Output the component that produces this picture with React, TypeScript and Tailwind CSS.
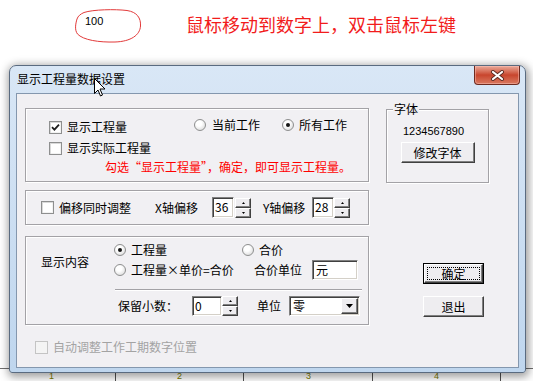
import React from 'react';

const face = 'bg-[#f1f0f3]';
const raised =
  'bg-[#eeedf0] border border-t-white border-l-white border-b-[#404040] border-r-[#404040] shadow-[inset_-1px_-1px_0_#808080]';
const sunken =
  'bg-white border border-t-[#808080] border-l-[#808080] border-b-white border-r-white shadow-[inset_1px_1px_0_#404040,inset_-1px_-1px_0_#d4d0c8]';

const Check: React.FC<{ checked?: boolean; disabled?: boolean }> = ({ checked, disabled }) => (
  <span
    className={`w-[13px] h-[13px] shrink-0 border flex items-center justify-center ${
      disabled
        ? 'border-[#c4c4c4] bg-[#f4f4f4]'
        : 'border-[#8e8f8f] bg-white shadow-[inset_1px_1px_0_#d9d9d9,inset_-1px_-1px_0_#f2f2f2]'
    }`}
  >
    {checked && (
      <svg width="9" height="9" viewBox="0 0 9 9">
        <path d="M1 4.2 L3.4 6.6 L8 1.6" stroke="#1d1d1d" strokeWidth="1.8" fill="none" />
      </svg>
    )}
  </span>
);

const Radio: React.FC<{ on?: boolean }> = ({ on }) => (
  <span className="w-[12px] h-[12px] shrink-0 rounded-full border border-[#8e8f8f] bg-[radial-gradient(circle_at_40%_35%,#ffffff_30%,#d2d2d2)] flex items-center justify-center">
    {on && <span className="w-[4px] h-[4px] rounded-full bg-[#151515]" />}
  </span>
);

const Spin: React.FC = () => (
  <div className="w-[16px] h-[20px] flex flex-col shrink-0">
    <div className={`h-[10px] ${raised} flex items-center justify-center`}>
      <svg width="3" height="2" viewBox="0 0 3 2">
        <path d="M1.5 0 L3 2 L0 2Z" fill="#000" />
      </svg>
    </div>
    <div className={`h-[10px] ${raised} flex items-center justify-center`}>
      <svg width="3" height="2" viewBox="0 0 3 2">
        <path d="M0 0 L3 0 L1.5 2Z" fill="#000" />
      </svg>
    </div>
  </div>
);

const Group: React.FC<{ className: string; children: React.ReactNode }> = ({ className, children }) => (
  <div className={`border border-[#a3a2a6] shadow-[inset_1px_1px_0_#ffffff,1px_1px_0_#ffffff] ${className}`}>{children}</div>
);

export default function App() {
  return (
    <div className="relative w-[533px] h-[381px] overflow-hidden bg-white font-['Noto_Sans_CJK_SC',sans-serif] text-[12px] leading-[14px] text-black">
      {/* ruler behind the dialog */}
      <div className="absolute inset-0">
        <div className="absolute left-0 right-0 top-[368px] h-px bg-[#707070]" />
        <div className="absolute left-[115px] top-[368px] w-px h-[13px] bg-[#505050]" />
        <div className="absolute left-[243px] top-[368px] w-px h-[13px] bg-[#505050]" />
        <div className="absolute left-[372px] top-[368px] w-px h-[13px] bg-[#505050]" />
        <div className="absolute left-[500px] top-[368px] w-px h-[13px] bg-[#505050]" />
        <span className="absolute left-[49px] top-[372px] text-[9px] leading-[9px] text-[#7b7b00] font-['Liberation_Sans',sans-serif]">1</span>
        <span className="absolute left-[177px] top-[372px] text-[9px] leading-[9px] text-[#7b7b00] font-['Liberation_Sans',sans-serif]">2</span>
        <span className="absolute left-[306px] top-[372px] text-[9px] leading-[9px] text-[#7b7b00] font-['Liberation_Sans',sans-serif]">3</span>
        <span className="absolute left-[434px] top-[372px] text-[9px] leading-[9px] text-[#7b7b00] font-['Liberation_Sans',sans-serif]">4</span>
      </div>

      <div className="relative">
        {/* hint row */}
        <div className="flex h-[65px]">
          <div className="relative ml-[75px] mt-[9px] w-[67px] h-[34px]">
            <svg className="absolute inset-0" width="67" height="34" viewBox="0 0 67 34">
              <path
                d="M9 3.5 C18 0.5 40 0 52 1.5 C62 3 66 9 65.5 17 C65 26 56 32.5 40 33 C24 33.5 8 31 2.5 25 C-0.5 21 0.5 15 2 10 C3 7 5.5 5 9 3.5 Z"
                fill="none"
                stroke="#e23a3a"
                strokeWidth="1"
              />
            </svg>
            <span className="relative block pl-[10px] pt-[7px] text-[11px] leading-[11px] font-['Liberation_Sans',sans-serif]">100</span>
          </div>
          <div className="ml-[44px] mt-[14px] text-[18px] leading-[20px] text-[#f21c1c] whitespace-nowrap">
            鼠标移动到数字上，双击鼠标左键
          </div>
        </div>

        {/* dialog window */}
        <div className="ml-[9px] w-[517px] h-[308px] rounded-t-[7px] rounded-b-[3px] border border-[#5a6b80] bg-gradient-to-b from-[#d9e7f6] to-[#bfd6ee] shadow-[1px_2px_9px_2px_rgba(0,0,0,0.38)] flex flex-col px-[6px] pb-[4px]">
          <div className="h-[27px] flex items-start justify-between">
            <span className="pl-[1px] pt-[6px] text-[12px] leading-[14px] text-black">显示工程量数据设置</span>
            <div className="w-[46px] h-[19px] -mr-[1px] rounded-b-[4px] border border-t-0 border-[#6e2a1f] bg-gradient-to-b from-[#e9a999] via-[#c8452d] to-[#d9785f] flex items-center justify-center shadow-[inset_0_0_0_1px_rgba(255,200,190,0.45)]">
              <svg width="15" height="11" viewBox="0 0 15 11">
                <path d="M3 2 L12 9 M12 2 L3 9" stroke="#5b2a22" strokeWidth="4" strokeLinecap="round" />
                <path d="M3 2 L12 9 M12 2 L3 9" stroke="#ffffff" strokeWidth="2.2" strokeLinecap="round" />
              </svg>
            </div>
          </div>

          {/* client area */}
          <div className={`flex-1 border border-[#8497ae] ${face} flex pl-[8px] pt-[14px]`}>
            {/* left column */}
            <div className="w-[344px] flex flex-col">
              <Group className="h-[74px] pt-[8px] pl-[23px]">
                <div className="h-[20px] flex items-center">
                  <div className="w-[145px] flex items-center">
                    <Check checked />
                    <span className="ml-[5px] whitespace-nowrap">显示工程量</span>
                  </div>
                  <div className="w-[88px] flex items-center mb-[4px]">
                    <Radio />
                    <span className="ml-[6px] whitespace-nowrap">当前工作</span>
                  </div>
                  <div className="flex items-center mb-[4px]">
                    <Radio on />
                    <span className="ml-[5px] whitespace-nowrap">所有工作</span>
                  </div>
                </div>
                <div className="h-[22px] flex items-center">
                  <Check />
                  <span className="ml-[5px] whitespace-nowrap">显示实际工程量</span>
                </div>
                <div className="h-[16px] flex items-center pl-[56px] text-[#ff0000] whitespace-nowrap">
                  勾选“显示工程量”，确定，即可显示工程量。
                </div>
              </Group>

              <Group className="mt-[8px] h-[35px] flex items-center pl-[15px]">
                <Check />
                <span className="ml-[5px] w-[96px] whitespace-nowrap">偏移同时调整</span>
                <span className="w-[57px] whitespace-nowrap">X轴偏移</span>
                <div className={`w-[22px] h-[21px] ${sunken} pl-[2px] leading-[18px]`}>36</div>
                <div className="ml-[1px]">
                  <Spin />
                </div>
                <span className="ml-[12px] w-[49px] whitespace-nowrap">Y轴偏移</span>
                <div className={`w-[22px] h-[21px] ${sunken} pl-[2px] leading-[18px]`}>28</div>
                <Spin />
              </Group>

              <Group className="mt-[11px] h-[89px] pl-[15px] pt-[3px]">
                <div className="flex">
                  <div className="w-[73px] pt-[15px] whitespace-nowrap">显示内容</div>
                  <div className="flex flex-col">
                    <div className="h-[20px] flex items-center">
                      <div className="w-[128px] flex items-center">
                        <Radio on />
                        <span className="ml-[5px] whitespace-nowrap">工程量</span>
                      </div>
                      <Radio />
                      <span className="ml-[5px] whitespace-nowrap">合价</span>
                    </div>
                    <div className="h-[20px] flex items-center">
                      <div className="w-[140px] flex items-center">
                        <Radio />
                        <span className="ml-[5px] whitespace-nowrap">工程量×单价=合价</span>
                      </div>
                      <span className="w-[58px] whitespace-nowrap">合价单位</span>
                      <div className={`w-[46px] h-[20px] ${sunken} pl-[3px] leading-[17px]`}>元</div>
                    </div>
                  </div>
                </div>
                <div className="mt-[9px] ml-[74px] w-[247px] h-[2px] border-t border-[#a3a2a6] bg-white" />
                <div className="mt-[5px] ml-[77px] h-[20px] flex items-center">
                  <span className="w-[74px] whitespace-nowrap">保留小数：</span>
                  <div className={`w-[30px] h-[20px] ${sunken} pl-[2px] leading-[17px]`}>0</div>
                  <Spin />
                  <span className="ml-[19px] w-[32px] whitespace-nowrap">单位</span>
                  <div className={`w-[71px] h-[20px] ${sunken} flex items-center`}>
                    <span className="flex-1 pl-[3px]">零</span>
                    <div className={`w-[17px] h-[16px] mr-[1px] ${raised} flex items-center justify-center`}>
                      <svg width="7" height="4" viewBox="0 0 7 4">
                        <path d="M0 0 L7 0 L3.5 4Z" fill="#000" />
                      </svg>
                    </div>
                  </div>
                </div>
              </Group>

              <div className="mt-[15px] ml-[10px] flex items-center text-[#a3a3a3]">
                <Check disabled />
                <span className="ml-[5px] whitespace-nowrap">自动调整工作工期数字位置</span>
              </div>
            </div>

            {/* right column */}
            <div className="ml-[17px] w-[103px] flex flex-col">
              <Group className="relative mt-[1px] h-[74px] flex flex-col items-center pt-[14px]">
                <span className={`absolute -top-[8px] left-[6px] px-[1px] ${face}`}>字体</span>
                <span className="h-[14px] text-[11px] font-['Liberation_Sans',sans-serif] ml-[-8px]">1234567890</span>
                <div className={`mt-[4px] w-[74px] h-[21px] ${raised} flex items-center justify-center`}>修改字体</div>
              </Group>

              <div className="mt-[80px] ml-[37px] w-[61px] h-[21px] border border-black">
                <div className={`w-full h-full ${raised} p-[2px]`}>
                  <div className="w-full h-full border border-dotted border-black flex items-center justify-center leading-[12px]">确定</div>
                </div>
              </div>
              <div className={`mt-[12px] ml-[37px] w-[61px] h-[21px] ${raised} flex items-center justify-center`}>退出</div>
            </div>
          </div>
        </div>

        {/* mouse pointer over the title */}
        <svg className="absolute left-[94px] top-[78px]" width="12" height="19" viewBox="0 0 12 19">
          <path d="M0.5 0.5 L0.5 15.5 L4 12 L6.5 18 L8.5 17 L6 11 L11 11 Z" fill="#ffffff" stroke="#000000" strokeWidth="1" strokeLinejoin="round" />
        </svg>
      </div>
    </div>
  );
}
